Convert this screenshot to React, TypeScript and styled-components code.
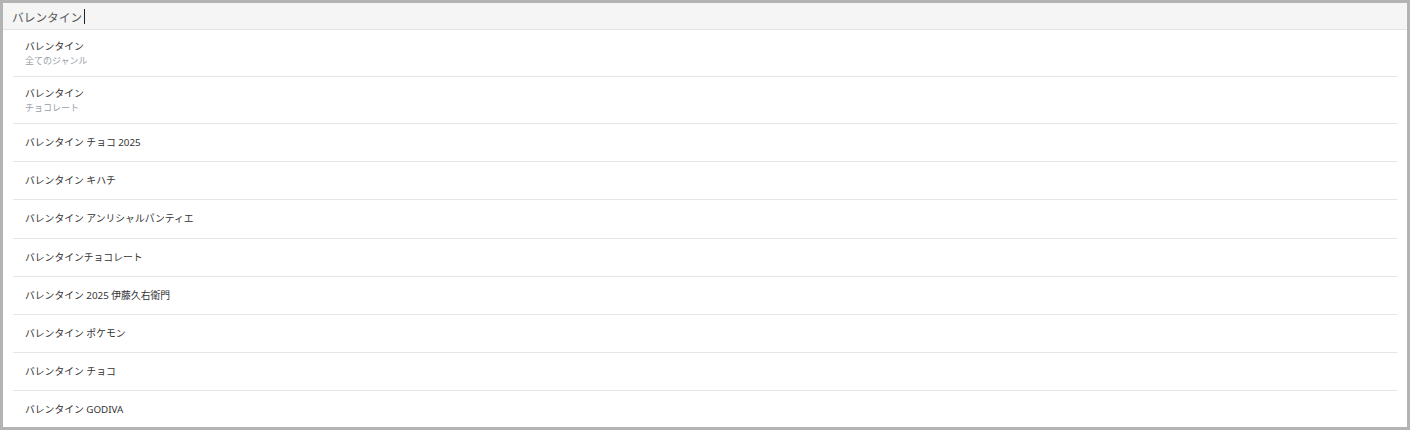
import * as React from 'react';
import styled, { createGlobalStyle } from 'styled-components';

const GlobalStyle = createGlobalStyle`
  html, body {
    margin: 0;
    padding: 0;
    background: #ffffff;
  }
  body {
    font-family: "Noto Sans", "Noto Sans CJK JP", sans-serif;
  }
`;

const Frame = styled.div`
  box-sizing: border-box;
  width: 1410px;
  height: 430px;
  border: 3px solid #b3b3b3;
  background: #ffffff;
  overflow: hidden;
  display: flex;
  flex-direction: column;
`;

const SearchBar = styled.div`
  flex: none;
  height: 26px;
  background: #f5f5f5;
  border-bottom: 1px solid #e4e4e4;
  display: flex;
  align-items: center;
  padding-left: 9px;
  font-size: 11.7px;
  color: #555;
`;

const Caret = styled.span`
  display: inline-block;
  width: 1px;
  height: 15px;
  margin-left: 2px;
  background: #222;
`;

const List = styled.ul`
  list-style: none;
  margin: 0 10px;
  padding: 0;
`;

const Row = styled.li<{ $double?: boolean }>`
  box-sizing: border-box;
  padding: ${(p) => (p.$double ? '9px 12px 8px' : '11px 12px')};
  border-bottom: 1px solid #e6e6e6;
  display: flex;
  flex-direction: column;
`;

const Main = styled.span<{ $double?: boolean }>`
  font-size: 9.8px;
  line-height: ${(p) => (p.$double ? '15px' : '15.2px')};
  color: #333;
  white-space: nowrap;
`;

const Sub = styled.span`
  font-size: 9px;
  line-height: 14px;
  color: #99a0a6;
  white-space: nowrap;
`;

const suggestions: { text: string; genre?: string }[] = [
  { text: 'バレンタイン', genre: '全てのジャンル' },
  { text: 'バレンタイン', genre: 'チョコレート' },
  { text: 'バレンタイン チョコ 2025' },
  { text: 'バレンタイン キハチ' },
  { text: 'バレンタイン アンリシャルパンティエ' },
  { text: 'バレンタインチョコレート' },
  { text: 'バレンタイン 2025 伊藤久右衛門' },
  { text: 'バレンタイン ポケモン' },
  { text: 'バレンタイン チョコ' },
  { text: 'バレンタイン GODIVA' },
];

export default function App() {
  return (
    <>
      <GlobalStyle />
      <Frame>
        <SearchBar>
          バレンタイン
          <Caret />
        </SearchBar>
        <List>
          {suggestions.map((s, i) => (
            <Row key={i} $double={!!s.genre}>
              <Main $double={!!s.genre}>{s.text}</Main>
              {s.genre && <Sub>{s.genre}</Sub>}
            </Row>
          ))}
        </List>
      </Frame>
    </>
  );
}
